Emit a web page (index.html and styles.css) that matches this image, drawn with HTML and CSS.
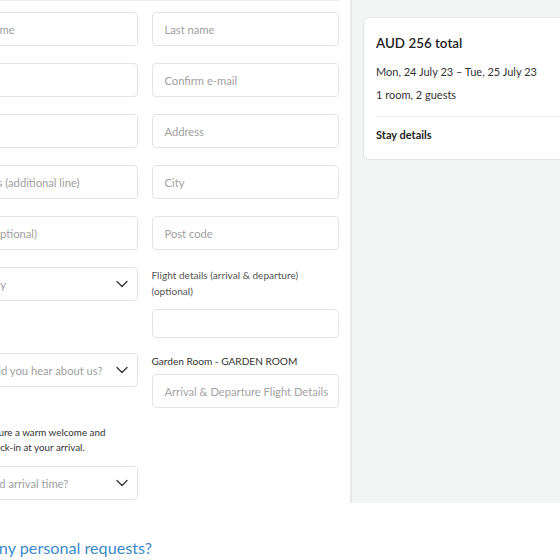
FILE: index.html
```html
<!DOCTYPE html>
<html>
<head>
<meta charset="utf-8">
<link rel="stylesheet" href="styles.css">
</head>
<body>
<div class="page">
  <div class="main">
    <div class="form">
      <div class="cols">
        <div class="col">
          <div class="field"><span class="ph">First name</span></div>
          <div class="field"><span class="ph">E-mail</span></div>
          <div class="field"><span class="ph">Phone</span></div>
          <div class="field"><span class="ph">Address (additional line)</span></div>
          <div class="field"><span class="ph">State (optional)</span></div>
          <div class="field select"><span class="ph">Country</span>
            <svg class="chev" width="12" height="8" viewBox="0 0 12 8"><path d="M1 1.5l5 5 5-5" fill="none" stroke="#3a3a3a" stroke-width="1.4" stroke-linecap="round" stroke-linejoin="round"/></svg>
          </div>
          <div class="field select sel-source"><span class="ph">How did you hear about us?</span>
            <svg class="chev" width="12" height="8" viewBox="0 0 12 8"><path d="M1 1.5l5 5 5-5" fill="none" stroke="#3a3a3a" stroke-width="1.4" stroke-linecap="round" stroke-linejoin="round"/></svg>
          </div>
          <p class="note">To help ensure a warm welcome and smooth check-in at your arrival.</p>
          <div class="field select sel-time"><span class="ph">Planned arrival time?</span>
            <svg class="chev" width="12" height="8" viewBox="0 0 12 8"><path d="M1 1.5l5 5 5-5" fill="none" stroke="#3a3a3a" stroke-width="1.4" stroke-linecap="round" stroke-linejoin="round"/></svg>
          </div>
        </div>
        <div class="col">
          <div class="field"><span class="ph">Last name</span></div>
          <div class="field"><span class="ph">Confirm e-mail</span></div>
          <div class="field"><span class="ph">Address</span></div>
          <div class="field"><span class="ph">City</span></div>
          <div class="field"><span class="ph">Post code</span></div>
          <div class="label label-flight">Flight details (arrival &amp; departure) (optional)</div>
          <div class="field field-short"></div>
          <div class="label label-room">Garden Room - GARDEN ROOM</div>
          <div class="field field-room"><span class="ph ph-lg">Arrival &amp; Departure Flight Details</span></div>
        </div>
      </div>
    </div>
    <aside class="aside">
      <div class="card">
        <div class="total">AUD 256 total</div>
        <div class="dates">Mon, 24 July 23 – Tue, 25 July 23</div>
        <div class="guests">1 room, 2 guests</div>
        <div class="divider"></div>
        <div class="stay">Stay details</div>
      </div>
    </aside>
  </div>
  <h2 class="requests">Have any personal requests?</h2>
</div>
</body>
</html>
```
FILE: styles.css
```css
html, body {
  margin: 0;
  padding: 0;
  background: #ffffff;
  overflow: hidden;
}
body {
  font-family: Lato, "Liberation Sans", sans-serif;
  color: #333;
}
.page {
  margin-left: -50px;
  width: 900px;
}
.main {
  display: flex;
  align-items: stretch;
}
.form {
  width: 389px;
  padding-right: 11px;
  padding-bottom: 3px;
}
.cols {
  display: grid;
  grid-template-columns: 1fr 1fr;
  column-gap: 14px;
  border-top: 1px solid #ececec;
  padding-top: 11px;
}
.col {
  display: flex;
  flex-direction: column;
  min-width: 0;
}
.field {
  box-sizing: border-box;
  height: 34px;
  border: 1px solid #e3e4e6;
  border-radius: 4px;
  display: flex;
  align-items: center;
  padding: 0 12px;
  margin-bottom: 17px;
  background: #fff;
}
.ph {
  font-size: 11.2px;
  color: #a0a0a0;
  white-space: nowrap;
}
.ph-lg {
  color: #a3a3a3;
}
.select {
  justify-content: space-between;
  padding-left: 15px;
  padding-right: 9px;
}
.chev { flex: none; }
.sel-source { margin-top: 35px; }
.note {
  margin: 21px 0 11px;
  max-width: 172px;
  font-size: 9.8px;
  line-height: 15px;
  color: #333;
}
.sel-time { margin-bottom: 0; }
.label {
  font-size: 10.1px;
  line-height: 16px;
  color: #555;
}
.field-short {
  height: 29px;
  margin-top: 10px;
  margin-bottom: 15px;
}
.label-room { color: #333; }
.field-room {
  margin-top: 5px;
  margin-bottom: 0;
}
.aside {
  flex: 1;
  background: #f3f4f4;
  border-left: 2px solid #e6e8eb;
  padding: 17px 0 0 11px;
}
.card {
  width: 260px;
  background: #fff;
  border: 1px solid #e2e4e7;
  border-radius: 6px;
  padding: 15px 12px;
}
.total {
  font-size: 13.4px;
  font-weight: 600;
  line-height: 20px;
  color: #222;
}
.dates {
  margin-top: 10px;
  font-size: 11px;
  line-height: 18px;
  color: #333;
}
.guests {
  margin-top: 5px;
  font-size: 11px;
  line-height: 18px;
  color: #333;
}
.divider {
  margin-top: 12px;
  border-top: 1px solid #eceeef;
}
.stay {
  margin-top: 9px;
  font-size: 11px;
  line-height: 18px;
  font-weight: 700;
  color: #222;
}
.requests {
  margin: 34px 0 0;
  font-size: 16.2px;
  line-height: 22px;
  font-weight: 400;
  color: #3b89c9;
}
```
